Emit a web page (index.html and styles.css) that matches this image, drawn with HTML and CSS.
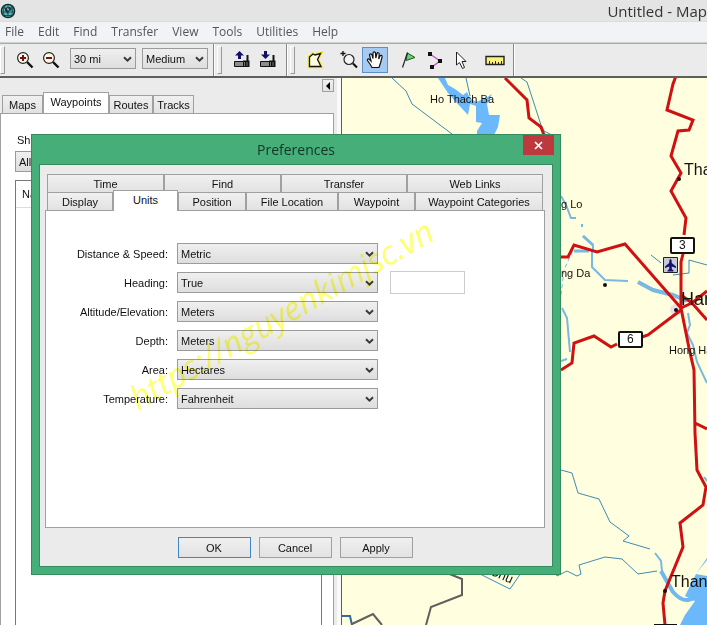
FILE: index.html
```html
<!DOCTYPE html>
<html lang="en">
<head>
<meta charset="utf-8">
<title>Untitled - Map</title>
<link rel="stylesheet" href="styles.css">
</head>
<body>
<svg class="defs" aria-hidden="true">
  <symbol id="chevron" viewBox="0 0 9 7"><path d="M1 1.2 4.5 4.7 8 1.2" fill="none" stroke="#3a3a3a" stroke-width="2"/></symbol>
</svg>

<header class="titlebar">
  <svg class="app-icon" width="16" height="16" viewBox="0 0 16 16"><circle cx="8" cy="8" r="6.6" fill="#54b9b9" stroke="#10282c" stroke-width="1.4"/><path d="M2 5h12M1.500 9h13M3 12.500h10M8 1.500v13M5 2.500C3 6 3 10 5 13.500M11 2.500c2 3.500 2 7.500 0 11" fill="none" stroke="#173a40" stroke-width=".8"/><path d="M5 5l5-1 2 3-3 1-1 3-3-3z" fill="#173a40"/><path d="M7 5l2 1-1 2z" fill="#b5eeee"/></svg>
  <span class="window-title">Untitled - Map</span>
</header>

<nav class="menu">
  <a href="#">File</a><a href="#">Edit</a><a href="#">Find</a><a href="#">Transfer</a><a href="#">View</a><a href="#">Tools</a><a href="#">Utilities</a><a href="#">Help</a>
</nav>

<div class="toolbar">
  <div class="group">
    <button class="tool" aria-label="Zoom in"><svg width="18" height="18" viewBox="0 0 18 18"><path d="M11 11l5.500 5.500" stroke="#111" stroke-width="2.400"/><circle cx="7" cy="7" r="5.400" fill="#fffbe8" stroke="#222" stroke-width="1.200"/><path d="M4 7h6M7 4v6" stroke="#7a1010" stroke-width="2"/></svg></button>
    <button class="tool" aria-label="Zoom out"><svg width="18" height="18" viewBox="0 0 18 18"><path d="M11 11l5.500 5.500" stroke="#111" stroke-width="2.400"/><circle cx="7" cy="7" r="5.400" fill="#fffbe8" stroke="#222" stroke-width="1.200"/><path d="M4 7h6" stroke="#7a1010" stroke-width="2"/></svg></button>
    <div class="select scale"><select aria-label="Scale"><option>30 mi</option></select><svg><use href="#chevron"/></svg></div>
    <div class="select scale"><select aria-label="Detail"><option>Medium</option></select><svg><use href="#chevron"/></svg></div>
  </div>
  <div class="group">
    <button class="tool" aria-label="Send to device"><svg width="18" height="18" viewBox="0 0 18 18"><path d="M6.500 0 11 4.500H8V8H5V4.500H2z" fill="#101068"/><path d="M1.500 10.500h13v5h-13z" fill="#8c8c8c" stroke="#111"/><path d="M14.500 4v8" stroke="#111" stroke-width="2"/><path d="M10 9.500h6.500V16H10z" fill="#111"/><path d="M11 12h1M13.500 12h1M11 14h1M13.500 14h1" stroke="#ddd"/></svg></button>
    <button class="tool" aria-label="Receive from device"><svg width="18" height="18" viewBox="0 0 18 18"><path d="M6.500 8 11 3.500H8V0H5v3.500H2z" fill="#101068"/><path d="M1.500 10.500h13v5h-13z" fill="#8c8c8c" stroke="#111"/><path d="M14.500 4v8" stroke="#111" stroke-width="2"/><path d="M10 9.500h6.500V16H10z" fill="#111"/><path d="M11 12h1M13.500 12h1M11 14h1M13.500 14h1" stroke="#ddd"/></svg></button>
  </div>
  <div class="group">
    <button class="tool" aria-label="Map tool"><svg width="18" height="18" viewBox="0 0 18 18"><path d="M3.500 6 7 3l2 1 5.500-1.500-3 6 3.500 7H3.500z" fill="#fffde0" stroke="#f3e63a" stroke-width="3.500"/><path d="M3.500 6 7 3l2 1 5.500-1.500-3 6 3.500 7H3.500z" fill="#fffde0" stroke="#111" stroke-width="1.300"/></svg></button>
    <button class="tool spaced" aria-label="Zoom tool"><svg width="18" height="18" viewBox="0 0 18 18"><path d="M3 0v5M.5 2.500h5" stroke="#111" stroke-width="1.300"/><path d="M13 12.500l4 4" stroke="#111" stroke-width="2.200"/><circle cx="9" cy="8.500" r="5" fill="#f4f4f4" stroke="#222" stroke-width="1.200"/></svg></button>
    <button class="tool active" aria-label="Hand tool"><svg width="18" height="18" viewBox="0 0 18 18"><path d="M6 16.500 4 13 1.500 9.500C1 8 2.500 7.500 3.500 8.500L5 10 3.500 4c0-1.600 2-1.600 2.500 0l1 3.500L7 2c.2-1.400 2.200-1.400 2.500 0l.3 5L11 2.500c.5-1.300 2.300-.9 2.200.5L12.700 8l1.300-3c.7-1.200 2.300-.6 2.100.8L14.500 12 13 16.500z" fill="#fff" stroke="#111" stroke-width="1.200"/></svg></button>
    <button class="tool spaced" aria-label="Waypoint tool"><svg width="18" height="18" viewBox="0 0 18 18"><path d="M7.500 2 15 6.500 6 9.500z" fill="#6fd07a" stroke="#145a20"/><path d="M7.500 1.500 2.500 16.500" stroke="#222" stroke-width="1.200"/></svg></button>
    <button class="tool" aria-label="Route tool"><svg width="18" height="18" viewBox="0 0 18 18"><path d="M4 3l10 7-8 6" fill="none" stroke="#c257c8" stroke-width="1.500"/><path d="M2 1h4v4H2zM12 8h4v4h-4zM4 14h4v4H4z" fill="#111"/></svg></button>
    <button class="tool" aria-label="Selection tool"><svg width="18" height="18" viewBox="0 0 18 18"><path d="M4.500 1v13l3-2.500 3 6 2-1-2.500-6h4z" fill="#fff" stroke="#222"/></svg></button>
    <button class="tool spaced" aria-label="Measure tool"><svg width="20" height="18" viewBox="0 0 20 18"><path d="M1 5.500h18v8H1z" fill="#fff27a" stroke="#222" stroke-width="1.400"/><path d="M4.500 13v-3M7.500 13v-2M10.500 13v-3M13.500 13v-2M16.500 13v-3" stroke="#222"/></svg></button>
  </div>
</div>

<main class="workspace">
  <aside class="side">
    <div class="side-top"><button class="collapse" aria-label="Collapse"><svg width="4" height="8" viewBox="0 0 4 8"><path d="M4 0v8L0 4z"/></svg></button></div>
    <div class="side-tabs"><button>Maps</button><button class="current">Waypoints</button><button>Routes</button><button>Tracks</button></div>
    <section class="side-page">
      <label for="category">Show</label>
      <div class="select"><select id="category"><option>All</option></select><svg><use href="#chevron"/></svg></div>
      <div class="list"><div class="list-head">Name</div></div>
    </section>
  </aside>
  <div class="map">
    <svg viewBox="342 78 365 547" width="365" height="547" role="img" aria-label="Map">
      <g fill="#6bb9fb">
        <path d="M438 78h7l3 7 7 4 8 6 4-3 3 6 6 4 10-4 6-4-5 10 2 11h11l-2 12-4 8h-17v-4l5-8-6-1v-16l-6-2-2 11-14-15-6-7z"/>
        <path d="M707 558l-11 16 11 2M707 560v65h-27l5-10 10-14-10-5 11-22z"/>
      </g>
      <g fill="none" stroke="#3d8bb5">
        <path d="M392 78l14 13 6 13 40 30M521 78l6 4 14 43 3 6 8 4M466 78l4 18"/>
        <path d="M561 470l11 3 6 20 21 6 11 23 19 14-6 5 27 8M556 574l1 2 10-5 10 5 4-2-2-9 26-8 17 2 16 15 19-3M478 573l32 16 11-16M651 255l10 8M673 275l16-2v-13l18 5"/>
        <path d="M342 616h8l2 9" stroke="#35699a" stroke-width="2"/>
      </g>
      <g fill="none" stroke="#79b9df" stroke-width="2">
        <path d="M561 196l5 9 5 13h5M582 224v3M583 236l10 9v4M592 249v18l13 13 23 1M562 308l5 10 3 34M561 361l6-2"/>
        <path d="M638 282l15 8 20 5 14 6" stroke-width="4"/>
        <path d="M583 236l10 9M574 251l15 0" stroke-width="3"/>
        <path d="M561 295l3-25 9-20" stroke-dasharray="4 3" stroke-width="1"/>
        <path d="M688 313l2 12-3 8 6 12 4 17 10 21M655 553l6 8 1 10M704 477l3 4"/>
      </g>
      <path d="M661 571l12 21q8 9 15 8l10-3" fill="none" stroke="#6bb9ee" stroke-width="4"/>
      <path d="M447 573l15 6v16l-31 12-5 18M352 624l21-10 9 11" fill="none" stroke="#5f5f5f" stroke-width="2"/>
      <circle cx="676" cy="310" r="6" fill="#eadfe4"/>
      <g fill="none" stroke="#cf1111" stroke-width="3">
        <path d="M505 78l22 22 2 18 12 9 3 8M676 76l-3 8-6 26 26 10-4 10-11 1-7 25 10 17-10 18 15 27-2 17M683 254l-2 8v46l8 40 5 22 1 63 2 37 9 17-3 18-23 18 3 24-18 44-2 12 2 22M695 423l12 6"/>
        <path d="M561 257h7l6-12 23 7 28-8 56 64M681 310l-33 25-6 2M617 344l-6 3-17-11-20 7-2 20-11 7M681 308l11-5 15 17M681 295l11 8 15-12"/>
      </g>
      <g fill="#fff" stroke="#111" stroke-width="2"><rect x="671" y="238" width="23" height="15" rx="1"/><rect x="619" y="332" width="23" height="15" rx="1"/><path d="M654 625h23"/></g>
      <path d="M663.500 257.500h14v15h-14z" fill="#c9c9d4" stroke="#222"/>
      <path d="M670.500 259c1 0 1.300 2 1.300 4l4.200 3.500v1.500l-4.200-1.500v2.500l1.700 1.500v1h-6v-1l1.700-1.500v-2.500L665 268v-1.500l4.200-3.500c0-2 .3-4 1.300-4z" fill="#14146e"/>
      <g fill="#111"><circle cx="679" cy="179" r="2"/><circle cx="605" cy="285" r="2"/><circle cx="676" cy="310" r="2"/><circle cx="665" cy="591" r="2"/></g>
      <g class="place">
        <text x="430" y="103">Ho Thach Ba</text><text x="561" y="208">g Lo</text><text x="561" y="277">ng Da</text><text x="669" y="354">Hong Ha</text>
        <text x="679" y="249" class="shield">3</text><text x="627" y="343" class="shield">6</text>
        <text transform="translate(489 574) rotate(24)" x="0" y="0" class="tilted">Chu</text>
      </g>
      <g class="town"><text x="684" y="175">Tha</text><text x="681" y="305" class="city">Han</text><text x="671" y="587">Than</text></g>
    </svg>
  </div>
</main>

<div class="dialog" role="dialog" aria-labelledby="dialog-title">
  <div class="dialog-title"><h1 id="dialog-title">Preferences</h1><button class="close" aria-label="Close"><svg width="9" height="9" viewBox="0 0 9 9"><path d="M1 1l7 7M8 1L1 8" stroke="#fff" stroke-width="1.700"/></svg></button></div>
  <div class="dialog-body">
    <div class="tab-row back"><button>Time</button><button>Find</button><button>Transfer</button><button>Web Links</button></div>
    <div class="tab-row front"><button>Display</button><button class="current">Units</button><button>Position</button><button>File Location</button><button>Waypoint</button><button>Waypoint Categories</button></div>
    <form class="panel">
      <label for="distance">Distance &amp; Speed:</label>
      <div class="select"><select id="distance"><option>Metric</option></select><svg><use href="#chevron"/></svg></div>
      <label for="heading">Heading:</label>
      <div class="select"><select id="heading"><option>True</option></select><svg><use href="#chevron"/></svg></div>
      <input class="offset" type="text" aria-label="Heading value">
      <label for="altitude">Altitude/Elevation:</label>
      <div class="select"><select id="altitude"><option>Meters</option></select><svg><use href="#chevron"/></svg></div>
      <label for="depth">Depth:</label>
      <div class="select"><select id="depth"><option>Meters</option></select><svg><use href="#chevron"/></svg></div>
      <label for="area">Area:</label>
      <div class="select"><select id="area"><option>Hectares</option></select><svg><use href="#chevron"/></svg></div>
      <label for="temperature">Temperature:</label>
      <div class="select"><select id="temperature"><option>Fahrenheit</option></select><svg><use href="#chevron"/></svg></div>
    </form>
    <div class="actions"><button class="primary">OK</button><button>Cancel</button><button>Apply</button></div>
  </div>
</div>
<div class="watermark">https://nguyenkimjsc.vn</div>
</body>
</html>
```
FILE: styles.css
```css
* { box-sizing: border-box; }
html, body { height: 100%; }
body {
  margin: 0;
  display: flex;
  flex-direction: column;
  overflow: hidden;
  position: relative;
  background: #ebebeb;
  color: #111;
  font: 11px/14px "Liberation Sans", Arial, sans-serif;
}
button, select, input { font: inherit; color: inherit; margin: 0; }
button { padding: 0; border: 1px solid #a0a0a0; background: linear-gradient(#f0f0f0, #e2e2e2); }
.defs { position: absolute; width: 0; height: 0; }

.titlebar { display: flex; align-items: center; height: 21px; flex: none; background: #e4e4e4; white-space: nowrap; }
.window-title { margin-left: auto; font: 15px/20px "Open Sans", sans-serif; color: #333; }

.menu { display: flex; gap: 14px; height: 22px; flex: none; padding: 0 5px; background: #f1f3f6; border-top: 1px solid #dcdcdc; border-bottom: 1px solid #cfcfcf; font: 12px/20px "Open Sans", sans-serif; }
.menu a { color: #555; text-decoration: none; }

.toolbar { display: flex; height: 35px; flex: none; border-top: 1px solid #aaa; border-bottom: 2px solid #5c5f5c; overflow: hidden; }
.group { display: flex; align-items: center; padding: 0 5px 0 2px; border-right: 1px solid #888; box-shadow: 1px 0 #fff; }
.group + .group { margin-left: 1px; }
.group:first-child { padding-left: 0; }
.group::before { content: ""; width: 3px; height: 26px; margin-right: 7px; border: 1px solid #999; border-left-color: #fff; border-top-color: #fff; }
.tool { width: 26px; height: 26px; display: grid; place-items: center; border-color: transparent; background: none; }
.tool.spaced { margin-left: 8px; }
.tool.active { background: #a6caf0; border-color: #5a8fc8; }

.select { position: relative; }
.select select { display: block; width: 100%; height: 21px; padding: 0 18px 0 3px; border: 1px solid #9b9b9b; border-radius: 0; appearance: none; background: linear-gradient(#efefef, #dedede); }
.select svg { position: absolute; right: 4px; top: 8px; width: 9px; height: 7px; pointer-events: none; }
.scale { width: 66px; margin: 0 0 3px 6px; }

.workspace { display: flex; flex: 1; min-height: 0; }
.side { width: 334px; flex: none; display: flex; flex-direction: column; }
.side-top { display: flex; justify-content: flex-end; height: 15px; padding: 1px 0; }
.collapse { width: 12px; height: 13px; display: grid; place-items: center; }
.side-tabs { display: flex; align-items: flex-end; height: 20px; padding-left: 2px; }
.side-tabs button { height: 18px; width: 41px; border-bottom: 0; white-space: nowrap; }
.side-tabs .current { height: 21px; width: 66px; background: #fff; padding-bottom: 3px; }
.side-tabs button:nth-child(3) { width: 44px; }
.side-page { flex: 1; display: flex; flex-direction: column; padding: 19px 11px 0 14px; background: #fff; border: 1px solid #a0a0a0; border-bottom: 0; }
.side-page .select { margin-top: 4px; }
.side-page label { padding-left: 2px; }
.list { flex: 1; margin-top: 8px; border: 1px solid #777; border-bottom: 0; }
.list-head { padding: 6px 6px; border-bottom: 1px solid #ddd; }
.map { flex: 1; min-width: 0; margin-left: 7px; overflow: hidden; background: #ffffdf; border-left: 1px solid #5c5f5c; box-shadow: -4px 0 #fafafa; }
.map svg { display: block; }
.place { font: 11px "Liberation Sans", sans-serif; fill: #111; }
.shield { font-size: 12px; }
.town { font: 16px "Liberation Sans", sans-serif; fill: #111; }
.city { font-size: 18px; }
.tilted { font-size: 13px; }

.dialog { position: absolute; left: 31px; top: 134px; width: 530px; padding: 0 7px 7px; background: #46ae78; border: 1px solid #358a5e; }
.dialog-title { position: relative; height: 29px; }
.dialog-title h1 { margin: 0; text-align: center; font: 14px/29px "Open Sans", sans-serif; color: #123524; }
.close { position: absolute; right: -1px; top: 0; width: 31px; height: 20px; display: grid; place-items: center; border: 0; background: #bd393d; }
.dialog-body { padding: 9px 7px 8px 5px; background: #ebebeb; border: 1px solid #358a5e; }
.tab-row { display: grid; grid-template-rows: 18px; height: 18px; align-items: end; margin: 0 2px; }
.tab-row button { height: 18px; border-bottom: 0; white-space: nowrap; }
.tab-row.back { grid-template-columns: 117fr 117fr 126fr 136fr; }
.tab-row.front { grid-template-columns: 66fr 65fr 68fr 92fr 77fr 128fr; }
.tab-row.front .current { height: 21px; margin-bottom: -1px; padding-bottom: 3px; z-index: 1; background: #fff; }
.panel { display: grid; grid-template-columns: 122px 201px 75px; grid-auto-rows: 21px; gap: 8px 9px; align-content: start; align-items: center; height: 318px; padding: 32px 0 0; background: #fff; border: 1px solid #a0a0a0; }
.panel label { grid-column: 1; text-align: right; }
.panel .select { grid-column: 2; }
.offset { margin-left: 3px; width: 75px; height: 23px; border: 1px solid #ccc; background: #fff; }
.actions { display: flex; justify-content: center; gap: 8px; padding: 9px 0 0; }
.actions button { width: 73px; height: 21px; }
.actions .primary { border-color: #3c87c7; }
.watermark { position: absolute; left: 138px; top: 378px; font: italic 33px/42px "Open Sans", sans-serif; color: #ffff70; white-space: nowrap; transform: rotate(-30deg); transform-origin: 0 33px; mix-blend-mode: multiply; pointer-events: none; }
```
